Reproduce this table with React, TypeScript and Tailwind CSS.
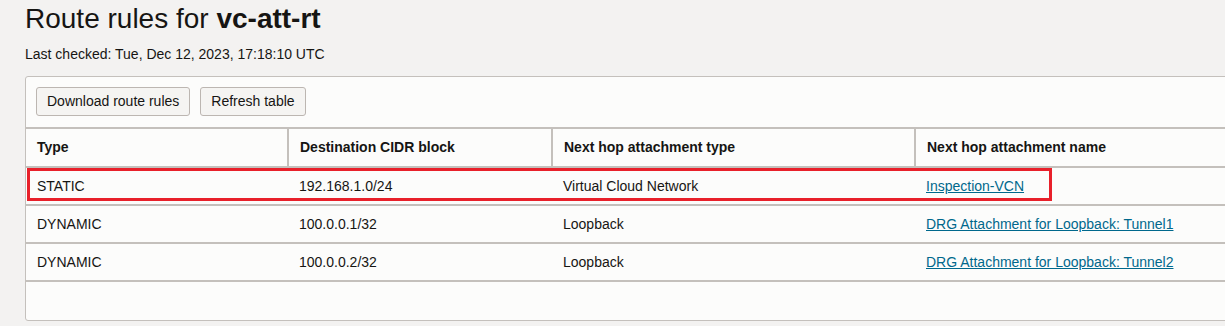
export default function App() {
  const rows = [
    { type: "STATIC", cidr: "192.168.1.0/24", hop: "Virtual Cloud Network", name: "Inspection-VCN" },
    { type: "DYNAMIC", cidr: "100.0.0.1/32", hop: "Loopback", name: "DRG Attachment for Loopback: Tunnel1" },
    { type: "DYNAMIC", cidr: "100.0.0.2/32", hop: "Loopback", name: "DRG Attachment for Loopback: Tunnel2" },
  ];

  return (
    <div
      className="w-[1225px] h-[326px] overflow-hidden bg-[#f3f2f1] text-[#161513]"
      style={{ fontFamily: '"Liberation Sans", Arial, sans-serif' }}
    >
      <div className="pl-[25px] pt-[2px]">
        {/* HEADER */}
        <h1 className="text-[28px] leading-[34px]">
          Route rules for <span className="font-bold">vc-att-rt</span>
        </h1>
        <p className="mt-[10px] text-[14px] leading-[16px]">
          Last checked: Tue, Dec 12, 2023, 17:18:10 UTC
        </p>

        {/* PANEL */}
        <div className="relative mt-[14px] w-[1215px] h-[245px] bg-[#fcfcfb] border border-[#c4c0bc] rounded-[3px]">
          <div className="flex gap-[10px] px-[10px] pt-[10px] h-[50px]">
            <button className="h-[29px] px-[10px] text-[14px] bg-[#f5f4f2] border border-[#bcb6b1] rounded-[3px]">
              Download route rules
            </button>
            <button className="h-[29px] px-[10px] text-[14px] bg-[#f5f4f2] border border-[#bcb6b1] rounded-[3px]">
              Refresh table
            </button>
          </div>

          <table className="w-full table-fixed text-[14px] border-collapse">
            <colgroup>
              <col className="w-[262px]" />
              <col className="w-[264px]" />
              <col className="w-[363px]" />
              <col />
            </colgroup>
            <thead>
              <tr className="h-[39px] border-y-2 border-[#c4c0bc]">
                <th className="text-left font-bold px-[11px] border-r-2 border-[#c4c0bc]">Type</th>
                <th className="text-left font-bold px-[11px] border-r-2 border-[#c4c0bc]">Destination CIDR block</th>
                <th className="text-left font-bold px-[11px] border-r-2 border-[#c4c0bc]">Next hop attachment type</th>
                <th className="text-left font-bold px-[11px]">Next hop attachment name</th>
              </tr>
            </thead>
            <tbody>
              {rows.map((r) => (
                <tr key={r.cidr} className="h-[38px] border-b-2 border-[#c4c0bc]">
                  <td className="px-[11px]">{r.type}</td>
                  <td className="px-[11px]">{r.cidr}</td>
                  <td className="px-[11px]">{r.hop}</td>
                  <td className="px-[11px]">
                    <a href="#" className="text-[#00688c] underline">
                      {r.name}
                    </a>
                  </td>
                </tr>
              ))}
            </tbody>
          </table>

          {/* highlight annotation */}
          <div className="absolute left-[1px] top-[91px] w-[1025px] h-[33px] border-[3px] border-[#e8202a]" />
        </div>
      </div>
    </div>
  );
}
